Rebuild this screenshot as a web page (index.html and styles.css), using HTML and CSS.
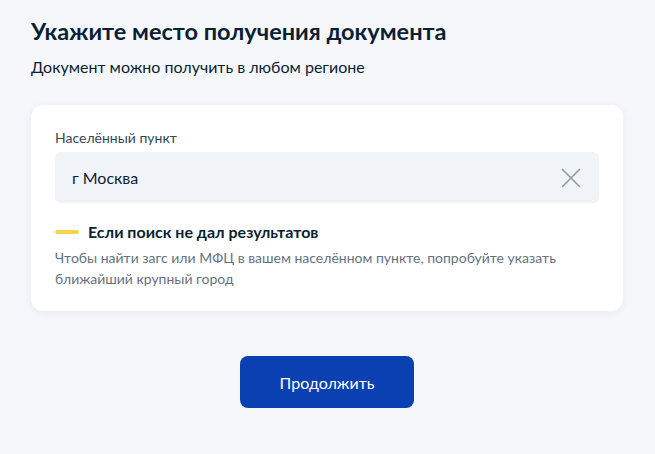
FILE: index.html
```html
<!DOCTYPE html>
<html lang="ru">

<head>
    <meta charset="UTF-8">
    <meta name="viewport" content="width=device-width, initial-scale=1.0">
    <title>Место получения документа</title>
    <link rel="stylesheet" href="styles.css">
</head>

<body>
    <div class="page">
        <h1 class="title">Укажите место получения документа</h1>
        <p class="subtitle">Документ можно получить в любом регионе</p>

        <div class="card">
            <label class="label" for="city">Населённый пункт</label>
            <div class="field">
                <input id="city" type="text" value="г Москва">
                <button class="clear" type="button" aria-label="Очистить">
                    <svg width="20" height="20" viewBox="0 0 20 20">
                        <path d="M1 1L19 19M19 1L1 19" stroke="#8d9aa8" stroke-width="1.6" fill="none" />
                    </svg>
                </button>
            </div>
            <div class="hint">
                <div class="hint-head">
                    <i class="hint-bar"></i>
                    <span>Если поиск не дал результатов</span>
                </div>
                <p class="hint-text">Чтобы найти загс или МФЦ в вашем населённом пункте, попробуйте указать ближайший крупный город</p>
            </div>
        </div>

        <div class="actions">
            <button class="btn" type="button">Продолжить</button>
        </div>
    </div>
</body>

</html>
```

FILE: styles.css
```css
body {
    margin: 0;
    background: #f5f7fb;
    font-family: Lato, "Noto Sans", sans-serif;
    color: #0b1f33;
}

.page {
    padding: 15px 32px 0 31px;
}

.title {
    margin: 0;
    font-size: 23.5px;
    line-height: 32px;
    font-weight: 700;
}

.subtitle {
    margin: 9px 0 0;
    font-size: 16px;
    line-height: 22px;
}

.card {
    margin-top: 27px;
    background: #fff;
    border-radius: 12px;
    box-shadow: 0 2px 10px rgba(0, 40, 90, 0.06);
    padding: 24px 24px 22px;
}

.label {
    display: block;
    font-size: 14px;
    line-height: 18px;
    color: #33475b;
    margin-bottom: 5px;
}

.field {
    display: flex;
    align-items: center;
    height: 51px;
    background: #f0f3f7;
    border-radius: 6px;
}

.field input {
    flex: 1;
    border: none;
    outline: none;
    background: transparent;
    padding: 0 0 0 17px;
    font-family: inherit;
    font-size: 16px;
    color: #0b1f33;
}

.clear {
    border: none;
    background: transparent;
    padding: 0;
    margin-right: 18px;
    width: 20px;
    height: 20px;
    cursor: pointer;
}

.hint {
    margin-top: 18px;
}

.hint-head {
    display: flex;
    align-items: center;
    font-size: 16px;
    font-weight: 700;
    line-height: 22px;
}

.hint-bar {
    width: 24px;
    height: 4px;
    border-radius: 2px;
    background: #f8d24f;
    margin-right: 9px;
}

.hint-text {
    margin: 4px 0 0;
    font-size: 14px;
    line-height: 21px;
    color: #66727f;
}

.actions {
    display: flex;
    justify-content: center;
    margin-top: 45px;
}

.btn {
    width: 174px;
    height: 52px;
    border: none;
    border-radius: 8px;
    background: #0b40b3;
    color: #fff;
    font-family: inherit;
    font-size: 16px;
    cursor: pointer;
}
```
